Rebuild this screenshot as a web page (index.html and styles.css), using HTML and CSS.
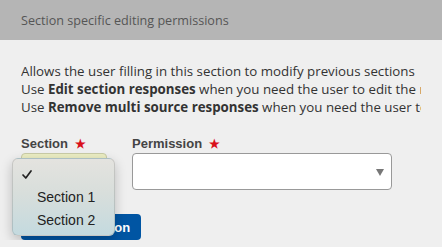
FILE: index.html
```html
<!DOCTYPE html>
<html lang="en">
<head>
  <meta charset="UTF-8" />
  <title>Section specific editing permissions</title>
  <link rel="stylesheet" href="styles.css">
</head>
<body>
  <div class="panelHeader">Section specific editing permissions</div>

  <div class="panelBody">
    <p class="intro">
      Allows the user filling in this section to modify previous sections<br>
      Use <strong>Edit section responses</strong> when you need the user to edit the responses<br>
      Use <strong>Remove multi source responses</strong> when you need the user to remove responses
    </p>

    <div class="fieldRow">
      <div class="field sectionField">
        <label class="fieldLabel">Section <span class="req">&#9733;</span></label>
        <div class="sectionSelect"></div>

        <div class="popupMenu">
          <div class="menuItem checked">
            <svg width="10" height="9" viewBox="0 0 10 9"><path d="M1 5 L3.8 8 L9 1" fill="none" stroke="#222" stroke-width="1.7" stroke-linecap="round" stroke-linejoin="round"/></svg>
          </div>
          <div class="menuItem">Section 1</div>
          <div class="menuItem">Section 2</div>
        </div>
      </div>

      <div class="field">
        <label class="fieldLabel">Permission <span class="req">&#9733;</span></label>
        <div class="permSelect"><span class="caret"></span></div>
      </div>
    </div>

    <button class="addBtn">Add permission</button>
  </div>
</body>
</html>
```

FILE: styles.css
```css
* {
  box-sizing: border-box;
}
body {
  margin: 0;
  background: #efefef;
  font-family: "Open Sans", Lato, sans-serif;
  color: #333;
  overflow: hidden;
}
.panelHeader {
  height: 40px;
  display: flex;
  align-items: center;
  padding: 0 21px;
  background: #b5b5b5;
  color: #555;
  font-size: 12.6px;
}
.panelBody {
  padding: 0 21px;
}
.intro {
  margin: 22px 0 0;
  font-size: 13.3px;
  line-height: 18px;
  white-space: nowrap;
  overflow: hidden;
}
.intro strong {
  color: #333;
}
.fieldRow {
  display: flex;
  gap: 25px;
  margin-top: 19px;
}
.field {
  display: flex;
  flex-direction: column;
}
.sectionField {
  position: relative;
}
.fieldLabel {
  font-family: "Liberation Sans", Arial, sans-serif;
  font-weight: bold;
  font-size: 13px;
  line-height: 17px;
  color: #444;
}
.req {
  color: #d9101a;
  font-size: 12px;
  margin-left: 3px;
}
.sectionSelect {
  width: 86px;
  height: 37px;
  background: #eceec3;
  border: 1px solid #c9cba6;
  border-radius: 4px;
}
.permSelect {
  position: relative;
  width: 260px;
  height: 37px;
  background: #fff;
  border: 1px solid #999;
  border-radius: 4px;
}
.caret {
  position: absolute;
  right: 7px;
  top: 15px;
  width: 0;
  height: 0;
  border-left: 4.5px solid transparent;
  border-right: 4.5px solid transparent;
  border-top: 7px solid #777;
}
.popupMenu {
  position: absolute;
  left: -9px;
  top: 23px;
  width: 103px;
  height: 78px;
  padding-top: 4px;
  border-radius: 6px;
  border: 1px solid rgba(0,0,0,0.12);
  background: linear-gradient(to bottom, #e4e3df 0%, #d8dedb 45%, #c4dadf 100%);
  box-shadow: 0 4px 12px rgba(0,0,0,0.22);
  font-family: "Liberation Sans", Arial, sans-serif;
  font-size: 14px;
  color: #222;
}
.menuItem {
  height: 23px;
  line-height: 23px;
  padding-left: 24px;
}
.menuItem.checked {
  display: flex;
  align-items: center;
  padding-left: 9px;
}
.addBtn {
  display: block;
  margin-top: 24px;
  width: 120px;
  height: 26px;
  border: none;
  border-radius: 4px;
  background: #0055a3;
  color: #fff;
  font-family: "Liberation Sans", Arial, sans-serif;
  font-weight: bold;
  font-size: 13px;
}
```
